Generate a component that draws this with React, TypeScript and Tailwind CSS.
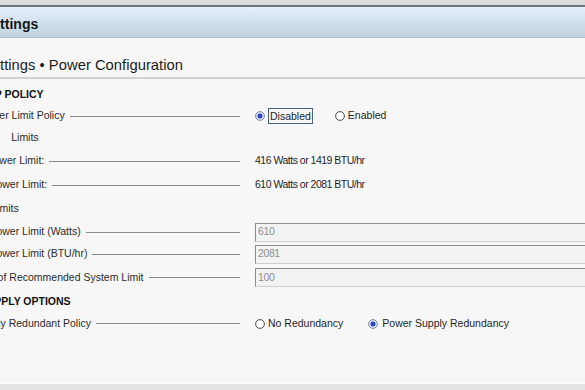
import React from "react";

const FONT = { fontFamily: '"Liberation Sans", Arial, sans-serif' };

function Radio({ checked }: { checked?: boolean }) {
  return (
    <svg width="10" height="10" viewBox="0 0 10 10" className="shrink-0">
      <circle cx="5" cy="5" r="4.4" fill={checked ? "#dfe7f7" : "#fdfdfd"} stroke={checked ? "#6d7f9c" : "#3a3a3a"} strokeWidth="0.9" />
      {checked && <circle cx="5" cy="5" r="2.5" fill="#2f48b8" />}
    </svg>
  );
}

function Row({ h, label, children }: { h: number; label: string; children?: React.ReactNode }) {
  return (
    <div className="flex items-center" style={{ height: h }}>
      <div className="flex w-[303px] shrink-0 items-center pl-[4px]">
        <span className="whitespace-nowrap text-[#2b2b2b]">{label}</span>
        <div className="ml-[5px] h-px flex-1 bg-[#8a8a8a]" />
      </div>
      <div className="flex flex-1 items-center pl-[15px] text-[#1f1f1f]">{children}</div>
    </div>
  );
}

function Heading({ h, bold, children }: { h: number; bold?: boolean; children: React.ReactNode }) {
  return (
    <div className={bold ? "flex items-center whitespace-nowrap font-bold text-[#111]" : "flex items-center whitespace-nowrap text-[#2b2b2b]"} style={{ height: h }}>
      {children}
    </div>
  );
}

function Field({ value }: { value: string }) {
  return (
    <div className="flex h-[19px] w-[360px] items-center border border-t-[#8d8d8d] border-l-[#8d8d8d] border-b-[#cfcfcf] border-r-[#cfcfcf] bg-[#f3f3f3] pl-[2px] tracking-[-0.4px] text-[#8e8e8e]">
      {value}
    </div>
  );
}

export default function App() {
  return (
    <div className="flex h-[390px] w-full flex-col overflow-hidden bg-[#f7f7f7]" style={FONT}>
      {/* window chrome */}
      <div className="h-[5px] bg-[#dcdcdc]" />
      <div className="h-[2px] bg-[#6f777c]" />
      <div className="flex h-[31px] items-center border-b border-[#aebdc8] bg-gradient-to-b from-[#e5f0fa] to-[#bfd3df] pt-[5px]">
        <span className="ml-[-17px] text-[14px] font-bold text-[#151515]">Settings</span>
      </div>

      <div className="flex h-[41px] items-start border-b-2 border-[#d2d2d2] pt-[19px]">
        <span className="ml-[-18px] whitespace-nowrap text-[14.8px] leading-[17px] text-[#1c1c1c]">
          Settings • Power Configuration
        </span>
      </div>

      <div className="flex-1 pt-[5px] text-[10.5px]">
        <div className="ml-[-63px]">
          <Heading h={21} bold>POWER CAP POLICY</Heading>
          <Row h={22} label="System Power Limit Policy">
            <div className="flex items-center gap-[3px]">
              <Radio checked />
              <span className="border border-[#4b5f86] px-[1px] leading-[14px]">Disabled</span>
            </div>
            <div className="ml-[22px] flex items-center gap-[3px]">
              <Radio />
              <span>Enabled</span>
            </div>
          </Row>
          <Heading h={22}>
            <span className="ml-[-12px]">Recommended</span>
            <span className="ml-[15px]">Limits</span>
          </Heading>
          <Row h={24} label="Minimum Power Limit:">
            <span className="tracking-[-0.5px]">416 Watts or 1419 BTU/hr</span>
          </Row>
          <Row h={24} label="Maximum Power Limit:">
            <span className="tracking-[-0.5px]">610 Watts or 2081 BTU/hr</span>
          </Row>
          <Heading h={24}>Configured Limits</Heading>
          <Row h={22} label="Maximum Power Limit (Watts)">
            <Field value="610" />
          </Row>
          <Row h={22} label="Maximum Power Limit (BTU/hr)">
            <Field value="2081" />
          </Row>
          <Row h={25} label="Percentage of Recommended System Limit">
            <Field value="100" />
          </Row>
          <Heading h={23} bold>POWER SUPPLY OPTIONS</Heading>
          <Row h={21} label="Power Supply Redundant Policy">
            <div className="flex items-center gap-[3px]">
              <Radio />
              <span>No Redundancy</span>
            </div>
            <div className="ml-[25px] flex items-center gap-[4px]">
              <Radio checked />
              <span>Power Supply Redundancy</span>
            </div>
          </Row>
        </div>
      </div>

      <div className="h-[7px] border-t border-[#fdfdfd] bg-[#e4e4e4]" />
    </div>
  );
}
